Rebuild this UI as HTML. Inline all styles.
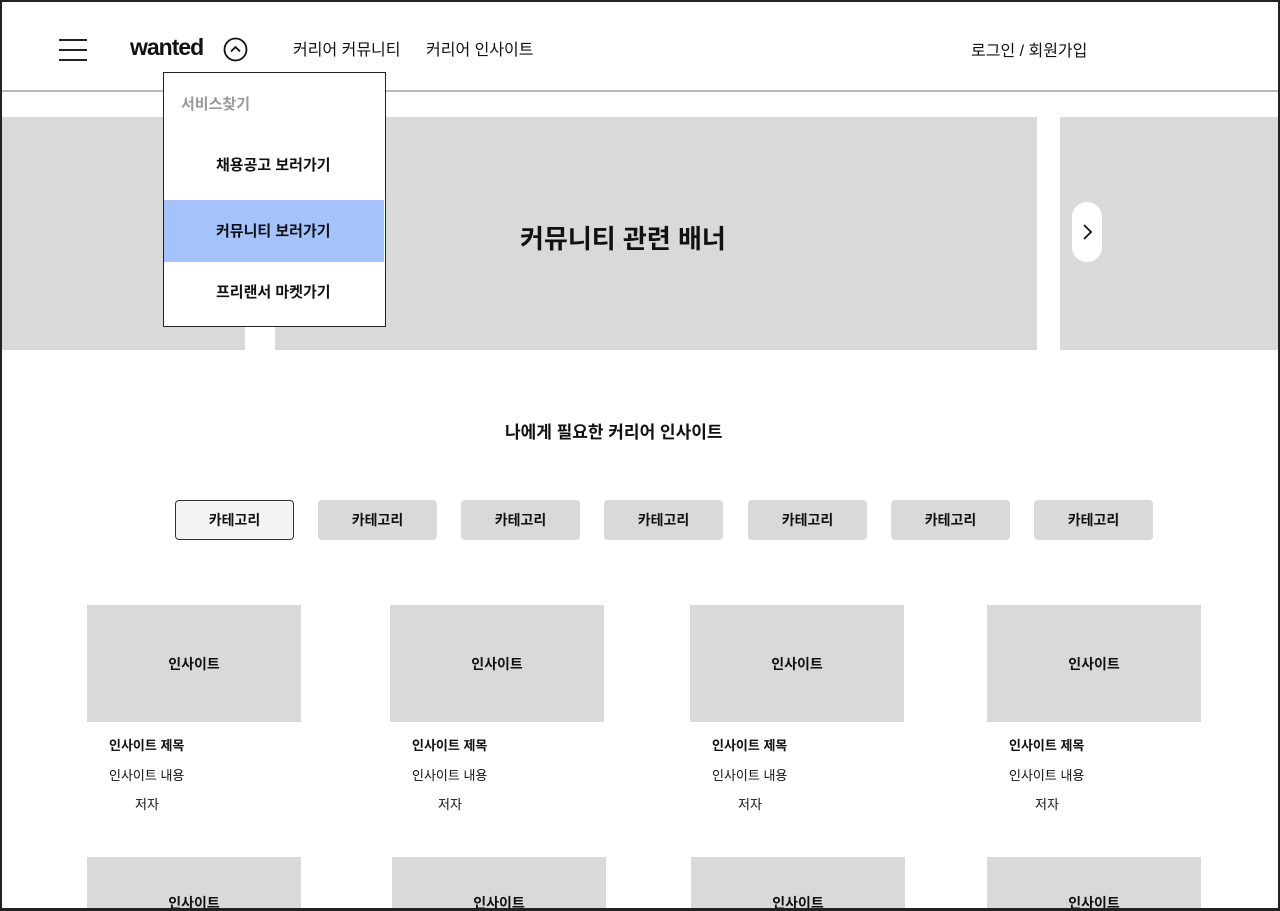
<!DOCTYPE html>
<html style="width:1280px;height:911px;overflow:hidden"><head><meta charset="utf-8"><style>
*{margin:0;padding:0;box-sizing:border-box}
body{width:1280px;height:911px;overflow:hidden;background:#fff;font-family:"Liberation Sans","Noto Sans CJK KR",sans-serif;color:#111;position:relative}
.frame{position:absolute;left:0;top:0;width:1280px;height:911px;border:2px solid #222;border-bottom-width:3px;z-index:50;pointer-events:none}
.a{position:absolute}
.g{background:#d9d9d9}
.t{position:absolute;white-space:nowrap}
.cat{position:absolute;top:500px;width:119px;height:40px;border-radius:4px;background:#d9d9d9;font-size:14px;font-weight:bold;display:flex;align-items:center;justify-content:center}
.img{position:absolute;width:214px;height:117px;background:#d9d9d9;display:flex;align-items:center;justify-content:center;font-size:14px;font-weight:bold}
</style></head><body>
<div class="frame"></div>
<div class="a" style="left:59px;top:39px;width:28px;height:2px;background:#222"></div>
<div class="a" style="left:59px;top:49px;width:28px;height:2px;background:#222"></div>
<div class="a" style="left:59px;top:59px;width:28px;height:2px;background:#222"></div>
<div class="t" style="left:130px;top:34px;font-size:23px;font-weight:bold;letter-spacing:-1px">wanted</div>
<svg class="a" style="left:223px;top:37px" width="25" height="25" viewBox="0 0 25 25"><circle cx="12.5" cy="12.5" r="11" fill="none" stroke="#111" stroke-width="1.8"/><path d="M8 14.5 L12.5 10 L17 14.5" fill="none" stroke="#111" stroke-width="1.8"/></svg>
<div class="t" style="left:293px;top:36px;font-size:16px">커리어 커뮤니티</div>
<div class="t" style="left:426px;top:36px;font-size:16px">커리어 인사이트</div>
<div class="t" style="left:971px;top:37px;font-size:16px">로그인 / 회원가입</div>
<div class="a" style="left:2px;top:90px;width:1276px;height:2px;background:#bbb"></div>
<div class="a g" style="left:2px;top:117px;width:243px;height:233px"></div>
<div class="a g" style="left:275px;top:117px;width:762px;height:233px"></div>
<div class="a g" style="left:1060px;top:117px;width:218px;height:233px"></div>
<div class="t" style="left:520px;top:219px;font-size:26px;font-weight:bold">커뮤니티 관련 배너</div>
<div class="a" style="left:1072px;top:202px;width:30px;height:60px;border-radius:15px;background:#fff"></div>
<svg class="a" style="left:1080px;top:222px" width="14" height="20" viewBox="0 0 14 20"><path d="M4 3 L11 10 L4 17" fill="none" stroke="#111" stroke-width="1.8"/></svg>
<div class="a" style="left:163px;top:72px;width:223px;height:255px;background:#fff;border:1.5px solid #222;z-index:10">
<div class="t" style="left:17px;top:20px;font-size:15px;font-weight:bold;color:#999">서비스찾기</div>
<div class="t" style="left:52px;top:81px;font-size:15px;font-weight:bold">채용공고 보러가기</div>
<div class="a" style="left:0;top:127px;width:220px;height:62px;background:#a4c2fc"></div>
<div class="t" style="left:52px;top:147px;font-size:15px;font-weight:bold">커뮤니티 보러가기</div>
<div class="t" style="left:52px;top:208px;font-size:15px;font-weight:bold">프리랜서 마켓가기</div>
</div>
<div class="t" style="left:505px;top:418px;font-size:17px;font-weight:bold">나에게 필요한 커리어 인사이트</div>
<div class="cat" style="left:175px;background:#f3f3f3;border:1.3px solid #333">카테고리</div>
<div class="cat" style="left:318px">카테고리</div>
<div class="cat" style="left:461px">카테고리</div>
<div class="cat" style="left:604px">카테고리</div>
<div class="cat" style="left:748px">카테고리</div>
<div class="cat" style="left:891px">카테고리</div>
<div class="cat" style="left:1034px">카테고리</div>
<div class="img" style="left:87px;top:605px">인사이트</div>
<div class="img" style="left:390px;top:605px">인사이트</div>
<div class="img" style="left:690px;top:605px">인사이트</div>
<div class="img" style="left:987px;top:605px">인사이트</div>
<div class="t" style="left:109px;top:735px;font-size:13px;font-weight:bold">인사이트 제목</div>
<div class="t" style="left:109px;top:765px;font-size:13px">인사이트 내용</div>
<div class="t" style="left:135px;top:794px;font-size:13px">저자</div>
<div class="t" style="left:412px;top:735px;font-size:13px;font-weight:bold">인사이트 제목</div>
<div class="t" style="left:412px;top:765px;font-size:13px">인사이트 내용</div>
<div class="t" style="left:438px;top:794px;font-size:13px">저자</div>
<div class="t" style="left:712px;top:735px;font-size:13px;font-weight:bold">인사이트 제목</div>
<div class="t" style="left:712px;top:765px;font-size:13px">인사이트 내용</div>
<div class="t" style="left:738px;top:794px;font-size:13px">저자</div>
<div class="t" style="left:1009px;top:735px;font-size:13px;font-weight:bold">인사이트 제목</div>
<div class="t" style="left:1009px;top:765px;font-size:13px">인사이트 내용</div>
<div class="t" style="left:1035px;top:794px;font-size:13px">저자</div>
<div class="img" style="left:87px;top:857px;height:54px;align-items:flex-start;padding-top:36px">인사이트</div>
<div class="img" style="left:392px;top:857px;height:54px;align-items:flex-start;padding-top:36px">인사이트</div>
<div class="img" style="left:691px;top:857px;height:54px;align-items:flex-start;padding-top:36px">인사이트</div>
<div class="img" style="left:987px;top:857px;height:54px;align-items:flex-start;padding-top:36px">인사이트</div>
</body></html>
